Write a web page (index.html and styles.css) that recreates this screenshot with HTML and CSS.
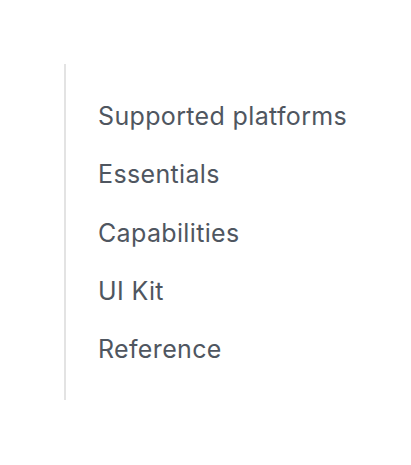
FILE: index.html
```html
<!DOCTYPE html>
<html>
<head>
<meta charset="utf-8">
<link rel="stylesheet" href="styles.css">
</head>
<body>
<nav class="toc">
  <ul class="toc-list">
    <li class="toc-item">Supported platforms</li>
    <li class="toc-item">Essentials</li>
    <li class="toc-item">Capabilities</li>
    <li class="toc-item">UI Kit</li>
    <li class="toc-item">Reference</li>
  </ul>
</nav>
</body>
</html>
```
FILE: styles.css
```css
html, body {
  margin: 0;
  padding: 0;
  background: #ffffff;
}
body {
  padding: 64px;
  font-family: Inter, "Noto Sans", sans-serif;
}
.toc {
  border-left: 2px solid #e3e3e3;
  width: max-content;
}
.toc-list {
  list-style: none;
  margin: 0;
  padding: 23px 0 22px 32px;
}
.toc-item {
  font-size: 25px;
  letter-spacing: 0.35px;
  line-height: 58.25px;
  color: #4f5660;
}
```
